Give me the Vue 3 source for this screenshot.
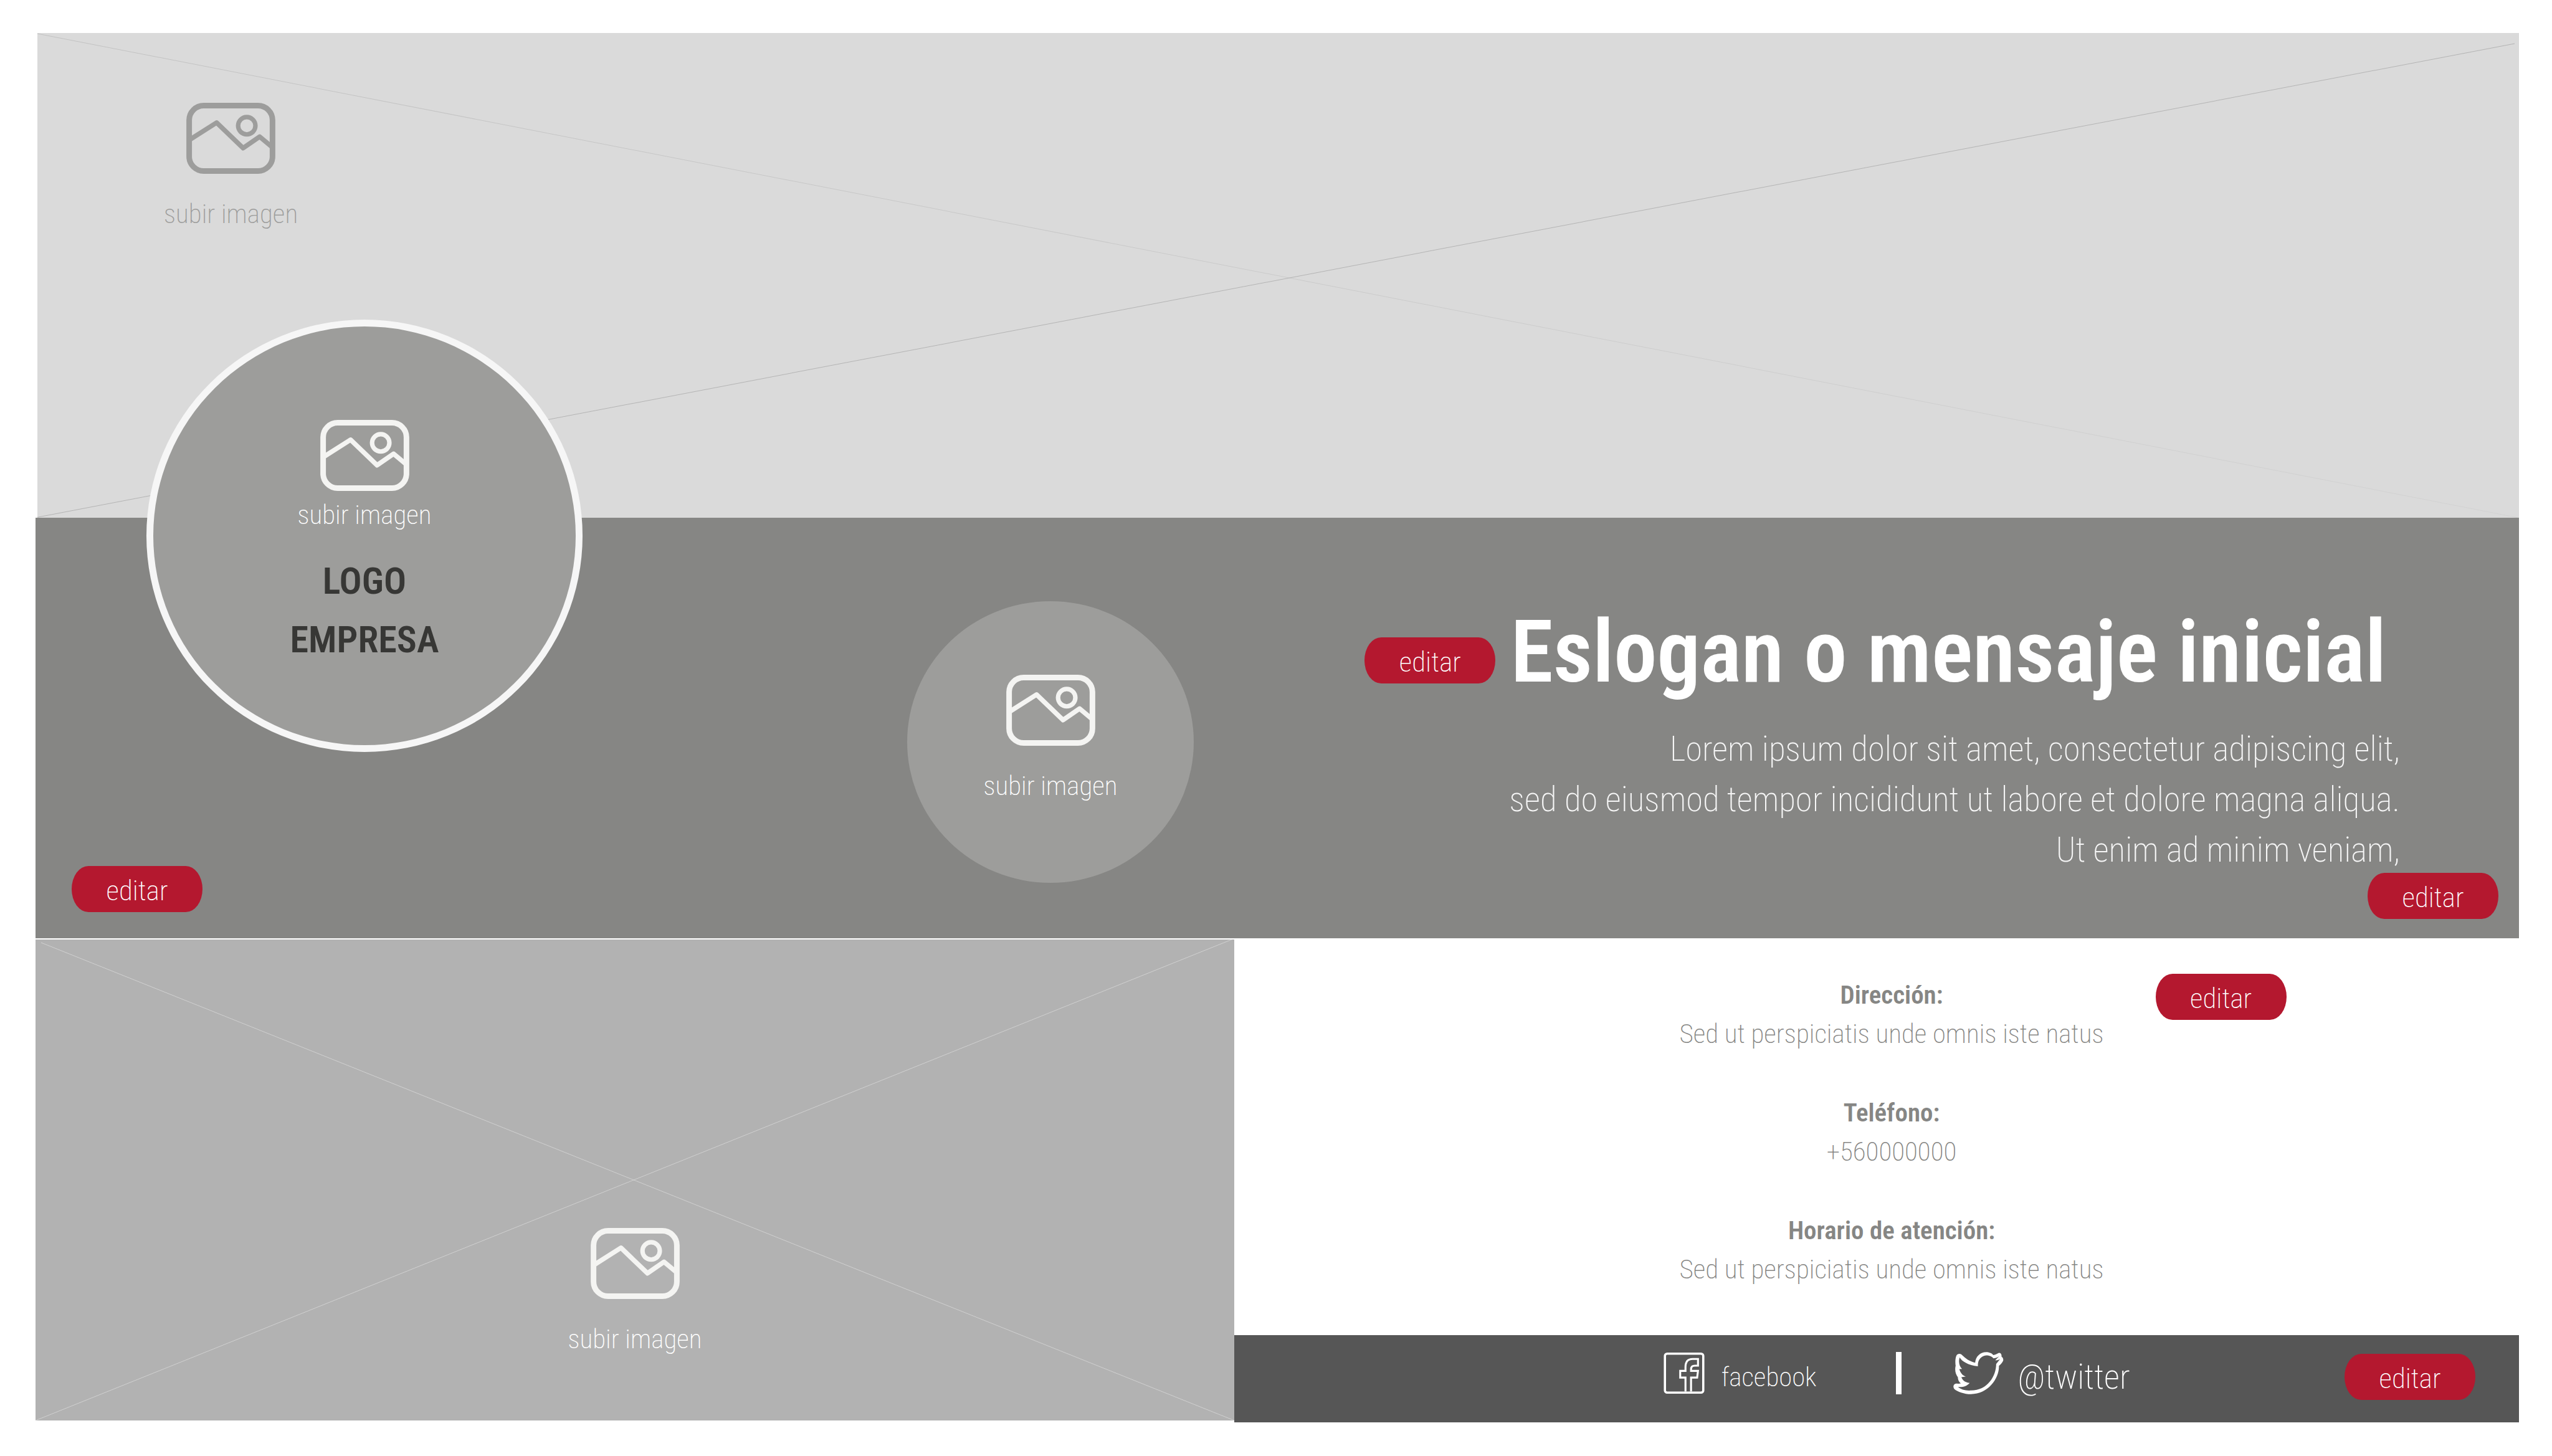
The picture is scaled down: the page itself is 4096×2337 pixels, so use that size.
<script setup>
const lorem = [
  'Lorem ipsum dolor sit amet, consectetur adipiscing elit,',
  'sed do eiusmod tempor incididunt ut labore et dolore magna aliqua.',
  'Ut enim ad minim veniam,',
]

const contact = [
  { label: 'Dirección:', value: 'Sed ut perspiciatis unde omnis iste natus' },
  { label: 'Teléfono:', value: '+560000000' },
  { label: 'Horario de atención:', value: 'Sed ut perspiciatis unde omnis iste natus' },
]
</script>

<template>
  <!-- shared picture glyph for every upload control -->
  <svg class="defs" aria-hidden="true">
    <symbol id="picture" viewBox="0 0 159 127">
      <g fill="none" stroke="currentColor" stroke-linejoin="round">
        <rect x="5" y="5" width="149" height="117" rx="26" stroke-width="10" />
        <path d="M6 66 L54 35.500 L101.500 81 L131 60.500 L153 79" stroke-width="8.500" />
        <circle cx="108" cy="41" r="15.500" stroke-width="8" />
      </g>
    </symbol>
  </svg>

  <main class="page">
    <section class="cover">
      <svg class="cross" viewBox="0 0 3982 778" preserveAspectRatio="none" aria-hidden="true">
        <defs>
          <linearGradient id="fade" x1="0" y1="0" x2="1" y2="0">
            <stop offset="0" stop-color="#c2c2c2" />
            <stop offset="1" stop-color="#d2d2d2" />
          </linearGradient>
        </defs>
        <path d="M0 1 L3982 778" stroke="url(#fade)" />
        <path d="M0 777 L3975 17" stroke="#b4b4b4" />
      </svg>
      <button type="button" class="upload cover-upload">
        <svg class="picture"><use href="#picture" /></svg>
        <span>subir imagen</span>
      </button>
      <div class="logo">
        <button type="button" class="upload tight">
          <svg class="picture"><use href="#picture" /></svg>
          <span>subir imagen</span>
        </button>
        <strong class="logo-name">LOGO<br />EMPRESA</strong>
      </div>
    </section>

    <section class="band">
      <div class="band-left">
        <button type="button" class="edit">editar</button>
      </div>
      <div class="band-right">
        <button type="button" class="upload round">
          <svg class="picture"><use href="#picture" /></svg>
          <span>subir imagen</span>
        </button>
        <div class="slogan">
          <div class="headline">
            <button type="button" class="edit">editar</button>
            <h1>Eslogan o mensaje inicial</h1>
          </div>
          <p>
            <span v-for="line in lorem" :key="line">{{ line }}</span>
          </p>
          <button type="button" class="edit">editar</button>
        </div>
      </div>
    </section>

    <div class="lower">
      <section class="panel">
        <svg class="cross" viewBox="0 0 1924 772" preserveAspectRatio="none" aria-hidden="true">
          <path d="M9 5 L1924 772" stroke="#d0d0d0" />
          <path d="M0 772 L1920 0" stroke="#d0d0d0" />
        </svg>
        <button type="button" class="upload">
          <svg class="picture"><use href="#picture" /></svg>
          <span>subir imagen</span>
        </button>
      </section>

      <div class="side">
        <section class="info">
          <dl>
            <div v-for="item in contact" :key="item.label">
              <dt>{{ item.label }}</dt>
              <dd>{{ item.value }}</dd>
            </div>
          </dl>
          <button type="button" class="edit">editar</button>
        </section>

        <footer class="social">
          <nav>
            <a href="#facebook">
              <svg class="fb" viewBox="0 0 73 74" fill="none" stroke="#fff" aria-hidden="true">
                <rect x="2" y="2" width="69" height="70" rx="4" stroke-width="4" />
                <path d="M39 70 V45 H29.500 V33 H39 V26 C39 17 43 11.500 52 11.500 H61.500 V23.500 H56 C51 23.500 49 26 49 30 V33 H61.500 L60 45 H49 V70" stroke-width="3.500" />
              </svg>
              <span>facebook</span>
            </a>
            <i class="divider"></i>
            <a href="#twitter" class="twitter">
              <svg class="tw" viewBox="30 29 272 230" aria-hidden="true">
                <path fill="#fff" fill-rule="evenodd" d="M64 39 C80 40 95 75 148 87 C150 55 175 30 208 30 C222 30 238 35 246 46 C258 45 265 40 275 35 C285 32 293 42 291 54 C298 58 302 66 300 76 C295 88 285 98 277 104 C280 170 220 258 125 258 C90 258 50 245 34 229 C25 215 32 203 45 201 C52 201 60 202 70 200 C60 192 54 180 54 166 C42 150 36 130 42 103 C38 80 42 50 50 43 Q56 39 64 39Z M64 59 C75 80 110 102 163 107 C160 75 180 50 208 48 C225 48 240 55 247 64 C262 62 270 58 279 52 L257 74 C265 75 274 73 283 68 C276 78 270 84 262 94 C262 160 215 238 125 238 C95 240 70 232 55 219 C80 222 105 214 118 197 C100 196 82 188 73 166 L97 163 C80 157 68 143 62 122 L77 121 C62 108 56 80 64 59Z" />
              </svg>
              <span>@twitter</span>
            </a>
          </nav>
          <button type="button" class="edit">editar</button>
        </footer>
      </div>
    </div>
  </main>
</template>

<style>
body {
  margin: 0;
  background: #fff;
}
</style>

<style scoped>
.page {
  padding: 53px 53px 53px 57px;
  font-family: 'Roboto Condensed', Roboto, sans-serif;
  font-size: 43px;
  font-weight: 200;
  line-height: 48px;
}

.defs {
  position: absolute;
  width: 0;
  height: 0;
}

button {
  padding: 0;
  border: 0;
  background: none;
  color: inherit;
  font: inherit;
  cursor: pointer;
}

.edit {
  flex: none;
  width: 210px;
  height: 74px;
  padding-top: 5px;
  border-radius: 27px / 37px;
  background: #b4182f;
  color: #fff;
  font-size: 45px;
}

.upload {
  display: flex;
  flex-direction: column;
  align-items: center;
  gap: 40px;
  color: #f4f4f2;
}

.upload span {
  color: #fff;
}

.upload.tight {
  gap: 14px;
}

.picture {
  width: 143px;
  height: 114px;
}

.cross {
  position: absolute;
  inset: 0;
  width: 100%;
  height: 100%;
}

.cross path {
  stroke-width: 1px;
  vector-effect: non-scaling-stroke;
}

/* cover */
.cover {
  position: relative;
  box-sizing: border-box;
  aspect-ratio: 3982 / 778;
  margin-left: 3px;
  padding: 112px 203px;
  background: #dadada;
}

.cover-upload,
.cover-upload span {
  position: relative;
  color: #9d9d9c;
}

.logo {
  position: absolute;
  z-index: 1;
  top: 460px;
  left: 175px;
  display: flex;
  flex-direction: column;
  align-items: center;
  box-sizing: border-box;
  width: 700px;
  height: 694px;
  padding-top: 150px;
  border: 11px solid #f6f6f6;
  border-radius: 50%;
  background: #9d9d9b;
}

.logo-name {
  margin-top: 36px;
  color: #373735;
  font-size: 60px;
  font-weight: 600;
  line-height: 94px;
  text-align: center;
}

/* band */
.band {
  display: grid;
  grid-template-columns: 1399fr 2587fr;
  background: #868684;
}

.band-left {
  display: flex;
  align-items: flex-end;
  padding: 0 0 42px 58px;
}

.band-right {
  display: flex;
  justify-content: space-between;
}

.round {
  flex: none;
  justify-content: center;
  box-sizing: border-box;
  width: 460px;
  height: 452px;
  margin: 134px 0 89px;
  padding-bottom: 14px;
  border-radius: 50%;
  background: #9d9d9b;
}

.slogan {
  display: flex;
  flex-direction: column;
  align-items: flex-end;
  padding: 146px 33px 0 0;
}

.headline {
  display: flex;
  align-items: flex-end;
  gap: 24px;
  margin-right: 180px;
}

.headline .edit {
  margin-bottom: 20px;
}

h1 {
  margin: 0;
  color: #fff;
  font-size: 139px;
  font-weight: 600;
  line-height: 140px;
  white-space: nowrap;
}

.slogan p {
  margin: 45px 158px -4px 0;
  color: #f6f6f6;
  font-size: 55px;
  line-height: 81px;
  text-align: right;
  white-space: nowrap;
}

.slogan p span {
  display: block;
}

/* lower half */
.lower {
  display: grid;
  grid-template-columns: 1924fr 2062fr;
  align-items: start;
  padding-top: 2px;
}

.panel {
  position: relative;
  display: flex;
  justify-content: center;
  align-items: flex-start;
  box-sizing: border-box;
  aspect-ratio: 1924 / 772;
  padding-top: 463px;
  background: #b2b2b2;
}

.panel .upload {
  position: relative;
}

.info {
  display: grid;
  grid-template-columns: 1fr auto 1fr;
  align-items: start;
  column-gap: 83px;
  padding: 55px 0 75px 48px;
  color: #868684;
}

dl {
  display: grid;
  grid-column: 2;
  gap: 65px;
  margin: 3px 0 0;
  line-height: 62px;
  text-align: center;
}

dt {
  font-size: 41px;
  font-weight: 600;
}

dd {
  margin: 0;
}

.social {
  display: flex;
  align-items: center;
  justify-content: space-between;
  padding: 27px 70px 33px 33.4%;
  background: #565656;
}

nav {
  display: flex;
  align-items: center;
  margin-bottom: 12px;
}

nav a {
  display: flex;
  align-items: center;
  gap: 27px;
  color: #fff;
  text-decoration: none;
}

nav a span {
  padding-top: 12px;
}

.twitter {
  gap: 22px;
  font-size: 55px;
}

.divider {
  width: 9px;
  height: 68px;
  margin: 0 83px 0 128px;
  background: #fff;
}

.fb {
  width: 66px;
  height: 66px;
}

.tw {
  width: 81px;
  height: 68px;
}
</style>
